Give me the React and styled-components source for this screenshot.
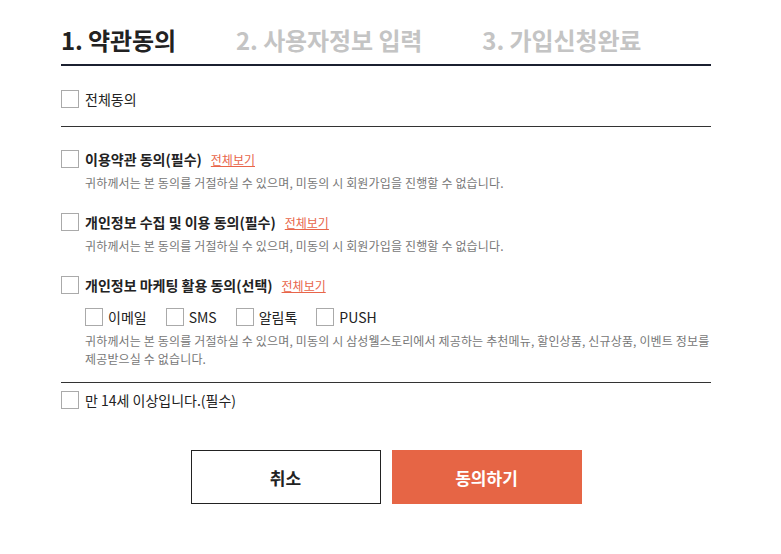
import React from "react";
import styled, { createGlobalStyle } from "styled-components";

const GlobalStyle = createGlobalStyle`
  body {
    margin: 0;
    background: #fff;
    font-family: "Noto Sans CJK KR", "Noto Sans", sans-serif;
    color: #222;
  }
`;

const Container = styled.div`
  width: 650px;
  margin-left: 61px;
`;

const Steps = styled.div`
  display: flex;
  gap: 60px;
  padding: 26px 0 10px;
  border-bottom: 2px solid #1b2030;
`;

const Step = styled.div`
  font-size: 24px;
  font-weight: 700;
  line-height: 28px;
  letter-spacing: -0.1px;
  color: ${(p) => (p.active ? "#222" : "#c4c4c4")};
`;

const AllRow = styled.div`
  padding: 24px 0 18px;
  border-bottom: 1px solid #333;
`;

const CheckLabel = styled.label`
  display: flex;
  align-items: center;
  gap: ${(p) => (p.small ? "5px" : "6px")};
  height: 18px;
  font-size: 14px;
  color: #222;
`;

const Box = styled.span`
  width: 16px;
  height: 16px;
  border: 1px solid #aaa;
  background: #fff;
  flex-shrink: 0;
`;

const Terms = styled.div`
  padding: 23px 0 14px;
  border-bottom: 1px solid #333;
`;

const Item = styled.div`
  & + & {
    margin-top: 21px;
  }
`;

const Title = styled.span`
  font-weight: 700;
`;

const Link = styled.a`
  margin-left: 3px;
  font-size: 12px;
  font-weight: 400;
  color: #e8654a;
  text-decoration: underline;
  cursor: pointer;
`;

const Desc = styled.p`
  margin: 6px 0 0 24px;
  font-size: 12px;
  line-height: 18px;
  color: #777;
  letter-spacing: 0.15px;
`;

const Channels = styled.div`
  display: flex;
  gap: 19px;
  margin: 14px 0 0 24px;
`;

const AgeRow = styled.div`
  padding-top: 8px;
`;

const Buttons = styled.div`
  display: flex;
  justify-content: center;
  gap: 11px;
  margin-top: 41px;
`;

const Button = styled.button`
  width: 190px;
  height: 54px;
  font-family: inherit;
  font-size: 17px;
  font-weight: 700;
  border: 1px solid ${(p) => (p.primary ? "#e66545" : "#222")};
  background: ${(p) => (p.primary ? "#e66545" : "#fff")};
  color: ${(p) => (p.primary ? "#fff" : "#222")};
  cursor: pointer;
`;

const Check = ({ children, small }) => (
  <CheckLabel small={small}>
    <Box />
    {children}
  </CheckLabel>
);

const desc = "귀하께서는 본 동의를 거절하실 수 있으며, 미동의 시 회원가입을 진행할 수 없습니다.";

export default function App() {
  return (
    <>
      <GlobalStyle />
      <Container>
        <Steps>
          <Step active>1. 약관동의</Step>
          <Step>2. 사용자정보 입력</Step>
          <Step>3. 가입신청완료</Step>
        </Steps>

        <AllRow>
          <Check>전체동의</Check>
        </AllRow>

        <Terms>
          <Item>
            <Check>
              <Title>이용약관 동의(필수)</Title>
              <Link>전체보기</Link>
            </Check>
            <Desc>{desc}</Desc>
          </Item>
          <Item>
            <Check>
              <Title>개인정보 수집 및 이용 동의(필수)</Title>
              <Link>전체보기</Link>
            </Check>
            <Desc>{desc}</Desc>
          </Item>
          <Item>
            <Check>
              <Title>개인정보 마케팅 활용 동의(선택)</Title>
              <Link>전체보기</Link>
            </Check>
            <Channels>
              <Check small>이메일</Check>
              <Check small>SMS</Check>
              <Check small>알림톡</Check>
              <Check small>PUSH</Check>
            </Channels>
            <Desc>
              귀하께서는 본 동의를 거절하실 수 있으며, 미동의 시 삼성웰스토리에서 제공하는 추천메뉴, 할인상품, 신규상품, 이벤트 정보를 제공받으실 수 없습니다.
            </Desc>
          </Item>
        </Terms>

        <AgeRow>
          <Check>만 14세 이상입니다.(필수)</Check>
        </AgeRow>

        <Buttons>
          <Button>취소</Button>
          <Button primary>동의하기</Button>
        </Buttons>
      </Container>
    </>
  );
}
